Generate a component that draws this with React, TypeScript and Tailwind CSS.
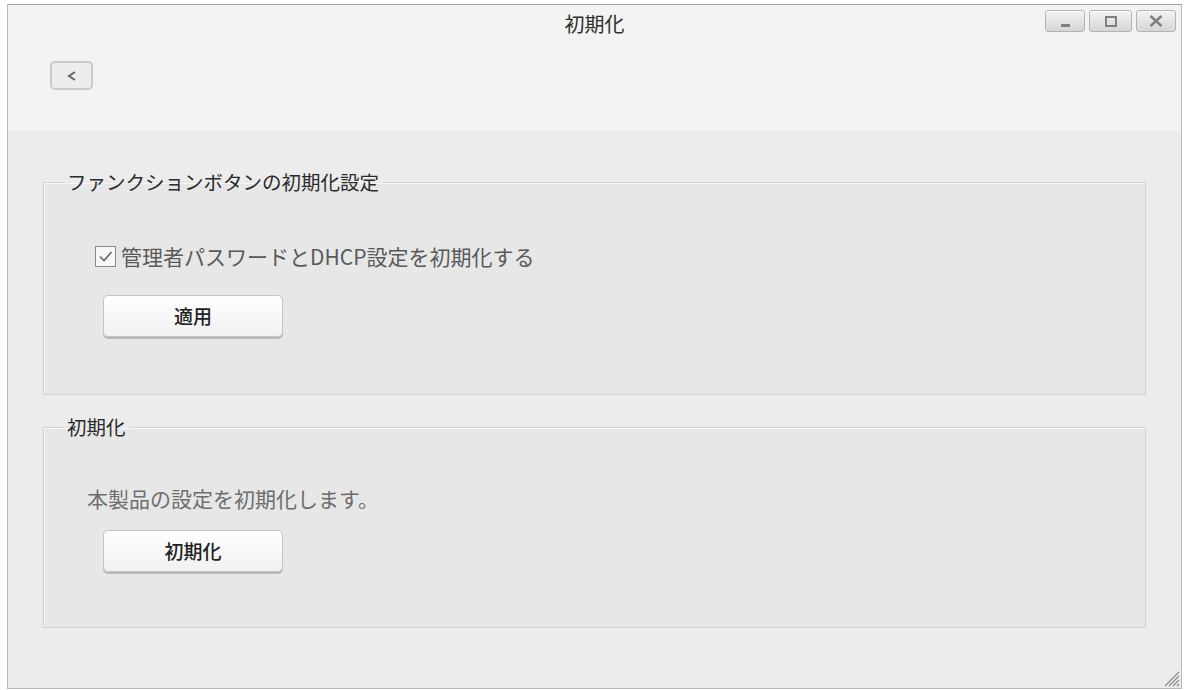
const font = { fontFamily: '"Noto Sans CJK JP", "Noto Sans", sans-serif' };

function WinButton({ children }: { children: React.ReactNode }) {
  return (
    <div className="flex h-[22px] items-center justify-center rounded-[3px] border border-[#b4b4b4] bg-gradient-to-b from-[#f4f4f4] to-[#d6d6d6] shadow-[inset_0_1px_0_#fff]">
      {children}
    </div>
  );
}

function PushButton({ label }: { label: string }) {
  return (
    <button className="flex h-[42px] w-[180px] items-center justify-center rounded-[5px] border border-[#c4c4c4] bg-gradient-to-b from-[#ffffff] to-[#f1f1f1] text-[19px] font-medium text-[#222] shadow-[0_2px_0_#b9b9b9]">
      {label}
    </button>
  );
}

function GroupBox({ title, children }: { title: string; children: React.ReactNode }) {
  return (
    <fieldset className="border border-[#d2d2d2] bg-[#e7e7e7] shadow-[inset_1px_1px_0_#f6f6f6]">
      <legend className="ml-[19px] px-[4px] text-[19.5px] leading-[24px] text-[#2b2b2b]">{title}</legend>
      {children}
    </fieldset>
  );
}

export default function App() {
  return (
    <div className="h-[690px] w-[1185px] bg-white pb-[1px] pl-[7px] pr-[3px] pt-[4px]" style={font}>
      <div className="relative flex h-full flex-col border border-[#b9b9b9] border-t-[#a6a6a6] bg-[#ececec]">
        {/* header */}
        <div className="h-[125px] bg-[#f3f3f3]">
          <div className="grid grid-cols-[1fr_auto_1fr] items-start pt-[5px]">
            <div />
            <div className="pt-[2px] text-[20px] leading-[24px] text-[#2e2e2e]">初期化</div>
            <div className="flex justify-end gap-[4px] pr-[5px]">
              <div className="w-[40px]">
                <WinButton>
                  <span className="mt-[9px] h-[3px] w-[9px] bg-[#808080]" />
                </WinButton>
              </div>
              <div className="w-[43px]">
                <WinButton>
                  <span className="h-[11px] w-[12px] border-2 border-[#808080]" />
                </WinButton>
              </div>
              <div className="w-[40px]">
                <WinButton>
                  <svg width="14" height="12" viewBox="0 0 14 12">
                    <path d="M1.5 1 L12.5 11 M12.5 1 L1.5 11" stroke="#808080" strokeWidth="2.4" />
                  </svg>
                </WinButton>
              </div>
            </div>
          </div>
          <div className="ml-[42px] mt-[25px] flex h-[29px] w-[43px] items-center justify-center rounded-[5px] border-2 border-[#cbcbcb] bg-[#ededed]">
            <svg width="14" height="14" viewBox="0 0 14 14">
              <path d="M10 3 L4 7 L10 11" fill="none" stroke="#666" strokeWidth="2" />
            </svg>
          </div>
        </div>

        {/* body */}
        <div className="flex flex-col gap-[20px] px-[35px] pt-[40px]">
          <GroupBox title="ファンクションボタンの初期化設定">
            <div className="pb-[57px] pl-[51px] pt-[50px]">
              <label className="flex items-center gap-[5px] text-[21px] leading-[24px] text-[#5a5a5a]">
                <span className="flex h-[21px] w-[21px] items-center justify-center border border-[#8a8a8a] bg-[#f7f7f7]">
                  <svg width="15" height="13" viewBox="0 0 15 13">
                    <path d="M2 6.5 L6 10.5 L13.5 2" fill="none" stroke="#666" strokeWidth="1.6" />
                  </svg>
                </span>
                管理者パスワードとDHCP設定を初期化する
              </label>
              <div className="ml-[8px] mt-[27px]">
                <PushButton label="適用" />
              </div>
            </div>
          </GroupBox>

          <GroupBox title="初期化">
            <div className="pb-[55px] pl-[43px] pt-[47px]">
              <p className="text-[21px] leading-[24px] text-[#6e6e6e]">本製品の設定を初期化します。</p>
              <div className="ml-[16px] mt-[20px]">
                <PushButton label="初期化" />
              </div>
            </div>
          </GroupBox>
        </div>

        {/* resize grip */}
        <svg className="absolute bottom-[1px] right-[1px]" width="18" height="18" viewBox="0 0 18 18">
          <path d="M17 3 L3 17 M17 7 L7 17 M17 11 L11 17 M17 15 L15 17" stroke="#8a8a8a" strokeWidth="1.2" />
        </svg>
      </div>
    </div>
  );
}
